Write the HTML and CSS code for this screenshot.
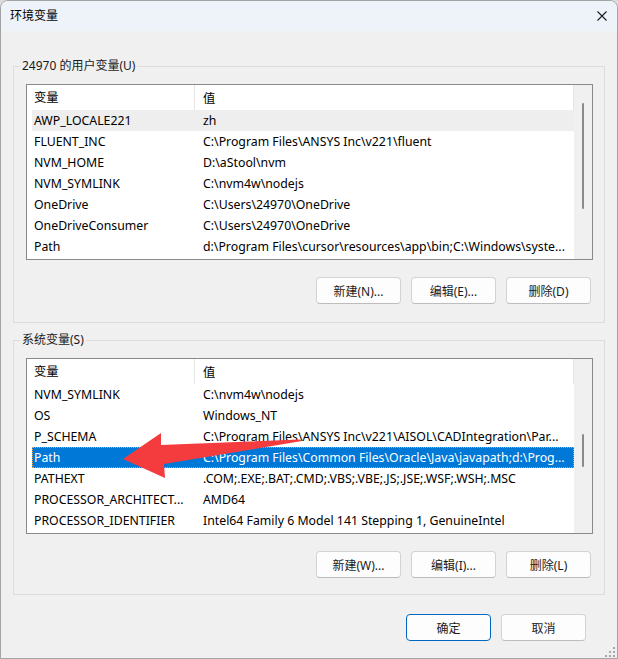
FILE: index.html
```html
<!DOCTYPE html>
<html lang="zh-CN">
<head>
  <meta charset="UTF-8">
  <title>环境变量</title>
  <link rel="stylesheet" href="styles.css">
</head>
<body>

  <div class="window">

    <!-- Title Bar -->
    <div class="titlebar">
      <span class="title">环境变量</span>
      <svg class="close" width="10" height="10" viewBox="0 0 10 10">
        <path d="M0.5 0.5 L9.5 9.5 M9.5 0.5 L0.5 9.5" stroke="#1a1a1a" stroke-width="1.1" fill="none"/>
      </svg>
    </div>

    <div class="content">

      <!-- User variables -->
      <fieldset class="group">
        <legend>24970 的用户变量(U)</legend>
        <div class="group-body">
          <div class="listview">
            <div class="lv-main">
              <div class="lv-header">
                <div class="col-name">变量</div>
                <div class="col-value">值</div>
              </div>
              <div class="lv-row hover"><div class="col-name">AWP_LOCALE221</div><div class="col-value">zh</div></div>
              <div class="lv-row"><div class="col-name">FLUENT_INC</div><div class="col-value">C:\Program Files\ANSYS Inc\v221\fluent</div></div>
              <div class="lv-row"><div class="col-name">NVM_HOME</div><div class="col-value">D:\aStool\nvm</div></div>
              <div class="lv-row"><div class="col-name">NVM_SYMLINK</div><div class="col-value">C:\nvm4w\nodejs</div></div>
              <div class="lv-row"><div class="col-name">OneDrive</div><div class="col-value">C:\Users\24970\OneDrive</div></div>
              <div class="lv-row"><div class="col-name">OneDriveConsumer</div><div class="col-value">C:\Users\24970\OneDrive</div></div>
              <div class="lv-row"><div class="col-name">Path</div><div class="col-value">d:\Program Files\cursor\resources\app\bin;C:\Windows\syste...</div></div>
            </div>
            <div class="lv-scroll">
              <div class="thumb thumb-user"></div>
            </div>
          </div>
          <div class="btn-row">
            <button class="btn">新建(N)...</button>
            <button class="btn">编辑(E)...</button>
            <button class="btn">删除(D)</button>
          </div>
        </div>
      </fieldset>

      <!-- System variables -->
      <fieldset class="group group-system">
        <legend>系统变量(S)</legend>
        <div class="group-body">
          <div class="listview">
            <div class="lv-main">
              <div class="lv-header">
                <div class="col-name">变量</div>
                <div class="col-value">值</div>
              </div>
              <div class="lv-row"><div class="col-name">NVM_SYMLINK</div><div class="col-value">C:\nvm4w\nodejs</div></div>
              <div class="lv-row"><div class="col-name">OS</div><div class="col-value">Windows_NT</div></div>
              <div class="lv-row"><div class="col-name">P_SCHEMA</div><div class="col-value">C:\Program Files\ANSYS Inc\v221\AISOL\CADIntegration\Par...</div></div>
              <div class="lv-row selected"><div class="col-name">Path</div><div class="col-value">C:\Program Files\Common Files\Oracle\Java\javapath;d:\Prog...</div></div>
              <div class="lv-row"><div class="col-name">PATHEXT</div><div class="col-value">.COM;.EXE;.BAT;.CMD;.VBS;.VBE;.JS;.JSE;.WSF;.WSH;.MSC</div></div>
              <div class="lv-row"><div class="col-name">PROCESSOR_ARCHITECT...</div><div class="col-value">AMD64</div></div>
              <div class="lv-row"><div class="col-name">PROCESSOR_IDENTIFIER</div><div class="col-value">Intel64 Family 6 Model 141 Stepping 1, GenuineIntel</div></div>
            </div>
            <div class="lv-scroll">
              <div class="thumb thumb-system"></div>
            </div>
          </div>
          <div class="btn-row">
            <button class="btn">新建(W)...</button>
            <button class="btn">编辑(I)...</button>
            <button class="btn">删除(L)</button>
          </div>
        </div>
      </fieldset>

      <!-- Dialog buttons -->
      <div class="dialog-buttons">
        <button class="btn btn-default">确定</button>
        <button class="btn">取消</button>
      </div>

    </div>

    <!-- Resize grip -->
    <svg class="grip" width="10" height="10" viewBox="0 0 10 10">
      <rect x="8" y="0" width="2" height="2" fill="#a8a8a8"/>
      <rect x="4" y="4" width="2" height="2" fill="#a8a8a8"/>
      <rect x="8" y="4" width="2" height="2" fill="#a8a8a8"/>
      <rect x="0" y="8" width="2" height="2" fill="#a8a8a8"/>
      <rect x="4" y="8" width="2" height="2" fill="#a8a8a8"/>
      <rect x="8" y="8" width="2" height="2" fill="#a8a8a8"/>
    </svg>

    <!-- Red annotation arrow -->
    <svg class="arrow" width="618" height="659" viewBox="0 0 618 659">
      <polygon points="123,459 161,433 161,445 300,439.5 302,441 164,464 165,478" fill="#f43c3e"/>
    </svg>

  </div>

</body>
</html>
```

FILE: styles.css
```css
* {
  margin: 0;
  padding: 0;
  box-sizing: border-box;
}

body {
  font-family: "Noto Sans", "Noto Sans CJK SC", sans-serif;
  font-size: 12px;
  color: #000;
  background-color: #dcdcdc;
}

/* Window frame */
.window {
  position: relative;
  width: 618px;
  height: 659px;
  background-color: #f0f0f0;
  border: 1px solid #a3a3a3;
  border-radius: 8px 8px 0 0;
  overflow: hidden;
}

/* Title bar */
.titlebar {
  display: flex;
  align-items: center;
  justify-content: space-between;
  height: 30px;
  padding-left: 9px;
  background-color: #eef3fa;
}

.titlebar .title {
  line-height: 16px;
}

.titlebar .close {
  margin-right: 10px;
}

.content {
  padding: 27px 12px 0 12px;
}

/* Group boxes */
.group {
  min-width: 0;
  border: 1px solid #dcdcdc;
  padding: 0;
  margin: 0;
}

.group legend {
  margin-left: 6px;
  padding: 0 2px;
  line-height: 16px;
  color: #1a1a1a;
}

.group-system {
  margin-top: 9px;
}

.group-body {
  padding: 10px 11px 18px 12px;
}

.group-system .group-body {
  padding-bottom: 16px;
}

/* List view */
.listview {
  display: flex;
  height: 176px;
  border: 1px solid #868a8e;
  background-color: #fff;
  font-size: 12.3px;
}

.lv-main {
  flex: 1;
  min-width: 0;
  padding-left: 5px;
}

.lv-header {
  display: flex;
  height: 25px;
  align-items: center;
  border-right: 1px solid #e5e5e5;
}

.lv-header .col-name {
  height: 25px;
  line-height: 25px;
  border-right: 1px solid #e5e5e5;
}

.lv-row {
  display: flex;
  height: 21px;
  line-height: 21px;
}

.col-name {
  width: 163px;
  flex-shrink: 0;
  padding: 0 2px 0 2px;
  white-space: nowrap;
  overflow: hidden;
  text-overflow: ellipsis;
}

.col-value {
  flex: 1;
  min-width: 0;
  padding: 0 2px 0 8px;
  white-space: nowrap;
  overflow: hidden;
  text-overflow: ellipsis;
}

.lv-row.hover {
  background-color: #eeeeee;
}

.lv-row.selected {
  background-color: #0078d7;
  color: #fff;
  outline: 1px dotted #f0a040;
  outline-offset: -1px;
}

/* Scroll bar */
.lv-scroll {
  width: 18px;
  flex-shrink: 0;
  background-color: #f0f0f0;
}

.thumb {
  width: 2px;
  margin-left: 8px;
  background-color: #8a8a8a;
  border-radius: 1px;
}

.thumb-user {
  margin-top: 18px;
  height: 106px;
}

.thumb-system {
  margin-top: 75px;
  height: 33px;
}

/* Buttons */
.btn-row {
  display: flex;
  justify-content: flex-end;
  gap: 10px;
  margin-top: 17px;
  margin-right: 2px;
}

.btn {
  width: 85px;
  height: 27px;
  font-family: "Noto Sans", "Noto Sans CJK SC", sans-serif;
  font-size: 12px;
  color: #1b1b1b;
  background-color: #fdfdfd;
  border: 1px solid #d3d3d3;
  border-bottom-color: #bdbdbd;
  border-radius: 4px;
  cursor: pointer;
}

.btn-default {
  border: 1px solid #0067c0;
}

.dialog-buttons {
  display: flex;
  justify-content: flex-end;
  gap: 10px;
  margin-top: 19px;
  margin-right: 19px;
}

/* Overlays */
.grip {
  position: absolute;
  right: 2px;
  bottom: 1px;
}

.arrow {
  position: absolute;
  top: -1px;
  left: -1px;
  pointer-events: none;
}
```
